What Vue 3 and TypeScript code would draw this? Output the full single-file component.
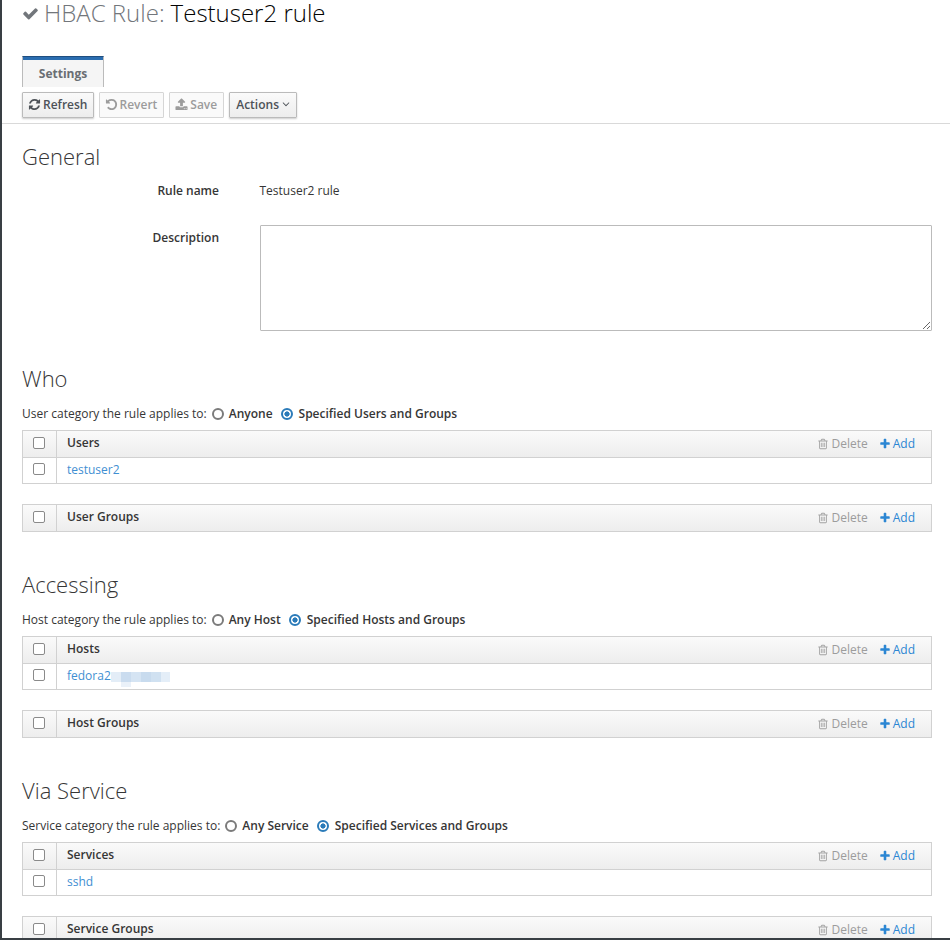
<script setup lang="ts">
interface Section {
  title: string
  prefix: string
  any: string
  specified: string
  main: string
  rows: string[]
  blurred?: boolean
  groups: string
}

const sections: Section[] = [
  { title: 'Who', prefix: 'User', any: 'Anyone', specified: 'Specified Users and Groups', main: 'Users', rows: ['testuser2'], groups: 'User Groups' },
  { title: 'Accessing', prefix: 'Host', any: 'Any Host', specified: 'Specified Hosts and Groups', main: 'Hosts', rows: ['fedora2'], blurred: true, groups: 'Host Groups' },
  { title: 'Via Service', prefix: 'Service', any: 'Any Service', specified: 'Specified Services and Groups', main: 'Services', rows: ['sshd'], groups: 'Service Groups' },
]

const trash = 'M704 736v576q0 14-9 23t-23 9h-64q-14 0-23-9t-9-23v-576q0-14 9-23t23-9h64q14 0 23 9t9 23zm256 0v576q0 14-9 23t-23 9h-64q-14 0-23-9t-9-23v-576q0-14 9-23t23-9h64q14 0 23 9t9 23zm256 0v576q0 14-9 23t-23 9h-64q-14 0-23-9t-9-23v-576q0-14 9-23t23-9h64q14 0 23 9t9 23zm128 724v-948h-896v948q0 22 7 40.5t14.5 27 10.5 8.5h832q3 0 10.5-8.5t14.5-27 7-40.5zm-672-1076h448l-48-117q-7-9-17-11h-317q-10 2-17 11zm928 32v64q0 14-9 23t-23 9h-96v948q0 83-47 143.5t-113 60.5h-832q-66 0-113-58.5t-47-141.5v-952h-96q-14 0-23-9t-9-23v-64q0-14 9-23t23-9h309l70-167q15-37 54-63t79-26h320q40 0 79 26t54 63l70 167h309q14 0 23 9t9 23z'
const plus = 'M1600 736v192q0 40-28 68t-68 28h-416v416q0 40-28 68t-68 28h-192q-40 0-68-28t-28-68v-416h-416q-40 0-68-28t-28-68v-192q0-40 28-68t68-28h416v-416q0-40 28-68t68-28h192q40 0 68 28t28 68v416h416q40 0 68 28t28 68z'
const check = 'M1671 566q0 40-28 68l-724 724-136 136q-28 28-68 28t-68-28l-136-136-362-362q-28-28-28-68t28-68l136-136q28-28 68-28t68 28l294 295 656-657q28-28 68-28t68 28l136 136q28 28 28 68z'
const refresh = 'M1639 1056q0 5-1 7-64 268-268 434.5t-478 166.5q-146 0-282.5-55t-243.5-157l-129 129q-19 19-45 19t-45-19-19-45v-448q0-26 19-45t45-19h448q26 0 45 19t19 45-19 45l-137 137q71 66 161 102t187 36q134 0 250-65t186-179q11-17 53-117 8-23 30-23h192q13 0 22.5 9.5t9.5 22.5zm25-800v448q0 26-19 45t-45 19h-448q-26 0-45-19t-19-45 19-45l138-138q-148-137-349-137-134 0-250 65t-186 179q-11 17-53 117-8 23-30 23h-199q-13 0-22.5-9.5t-9.5-22.5v-7q65-268 270-434.5t480-166.5q146 0 284 55.5t245 156.5l130-129q19-19 45-19t45 19 19 45z'
const undo = 'M1664 896q0 156-61 298t-164 245-245 164-298 61q-172 0-327-72.5t-264-204.5q-7-10-6.5-22.5t8.5-20.5l137-138q10-9 25-9 16 2 23 12 73 95 179 147t225 52q104 0 198.5-40.5t163.5-109.5 109.5-163.5 40.5-198.5-40.5-198.5-109.5-163.5-163.5-109.5-198.5-40.5q-98 0-188 35.5t-160 101.5l137 138q31 30 14 69-17 40-59 40h-448q-26 0-45-19t-19-45v-448q0-42 40-59 39-17 69 14l130 129q107-101 244.5-156.5t284.5-55.5q156 0 298 61t245 164 164 245 61 298z'
const upload = 'M1344 1472q0-26-19-45t-45-19-45 19-19 45 19 45 45 19 45-19 19-45zm256 0q0-26-19-45t-45-19-45 19-19 45 19 45 45 19 45-19 19-45zm128-224v320q0 40-28 68t-68 28h-1472q-40 0-68-28t-28-68v-320q0-40 28-68t68-28h427q21 56 70.5 92t110.5 36h256q61 0 110.5-36t70.5-92h427q40 0 68 28t28 68zm-325-648q-17 40-59 40h-256v448q0 26-19 45t-45 19h-256q-26 0-45-19t-19-45v-448h-256q-42 0-59-40-17-39 14-69l448-448q18-19 45-19t45 19l448 448q31 30 14 69z'
const angle = 'M1395 736q0 13-10 23l-466 466q-10 10-23 10t-23-10l-466-466q-10-10-10-23t10-23l50-50q10-10 23-10t23 10l393 393 393-393q10-10 23-10t23 10l50 50q10 10 10 23z'
</script>

<template>
  <div class="page">
    <h1 class="title">
      <svg class="check" viewBox="0 0 1792 1792" width="17" height="17"><path :d="check" fill="#72767b" /></svg>
      <span class="kind">HBAC Rule:</span>
      <span class="name">Testuser2 rule</span>
    </h1>

    <div class="tabs"><div class="tab">Settings</div></div>

    <div class="toolbar">
      <button class="btn">
        <svg class="ic" viewBox="0 0 1792 1792" width="13" height="13"><path :d="refresh" fill="#4d5258" /></svg>
        Refresh
      </button>
      <button class="btn off revert">
        <svg class="ic" viewBox="0 0 1792 1792" width="13" height="13"><path :d="undo" fill="#9c9c9c" /></svg>
        Revert
      </button>
      <button class="btn off">
        <svg class="ic" viewBox="0 0 1792 1792" width="13" height="13"><path :d="upload" fill="#9c9c9c" /></svg>
        Save
      </button>
      <button class="btn drop">
        Actions
        <svg class="chev" viewBox="0 0 1792 1792" width="12" height="12"><path :d="angle" fill="#4d5258" /></svg>
      </button>
    </div>

    <div class="rule"></div>

    <div class="content">
      <h2 class="heading first">General</h2>
      <div class="field name-field">
        <label class="flabel">Rule name</label>
        <span class="fvalue">Testuser2 rule</span>
      </div>
      <div class="field desc-field">
        <label class="flabel">Description</label>
        <textarea class="desc"></textarea>
      </div>

      <section v-for="s in sections" :key="s.title" class="sec">
        <h2 class="heading">{{ s.title }}</h2>
        <div class="cat">
          <span>{{ s.prefix }} category the rule applies to:</span>
          <span class="radio"></span><b class="rlabel">{{ s.any }}</b>
          <span class="radio on"></span><b class="rlabel">{{ s.specified }}</b>
        </div>

        <div class="tbl">
          <div class="thead">
            <div class="cb-cell"><span class="cb"></span></div>
            <div class="hname">{{ s.main }}</div>
            <span class="act del">
              <svg viewBox="0 0 1792 1792" width="12" height="12"><path :d="trash" fill="#a3a3a3" /></svg>
              Delete
            </span>
            <span class="act add">
              <svg viewBox="0 0 1792 1792" width="12" height="12"><path :d="plus" fill="#2b86d3" /></svg>
              Add
            </span>
          </div>
          <div v-for="r in s.rows" :key="r" class="trow">
            <div class="cb-cell"><span class="cb"></span></div>
            <a class="link">{{ r }}<span v-if="s.blurred" class="smudge"></span></a>
          </div>
        </div>

        <div class="tbl second">
          <div class="thead">
            <div class="cb-cell"><span class="cb"></span></div>
            <div class="hname">{{ s.groups }}</div>
            <span class="act del">
              <svg viewBox="0 0 1792 1792" width="12" height="12"><path :d="trash" fill="#a3a3a3" /></svg>
              Delete
            </span>
            <span class="act add">
              <svg viewBox="0 0 1792 1792" width="12" height="12"><path :d="plus" fill="#2b86d3" /></svg>
              Add
            </span>
          </div>
        </div>
      </section>
    </div>
  </div>
</template>

<style>
html, body { margin: 0; overflow: hidden; background: #fff; }
</style>

<style scoped>
.page {
  box-sizing: border-box;
  width: 950px;
  height: 940px;
  overflow: hidden;
  border-left: 2px solid #393f44;
  border-bottom: 2px solid #393f44;
  background: #fff;
  font-family: "Open Sans", "Liberation Sans", sans-serif;
  font-size: 12px;
  color: #363636;
}
.title {
  display: flex;
  align-items: center;
  height: 26px;
  margin: 0;
  padding-left: 20px;
  font-size: 24px;
  font-weight: 300;
  line-height: 26px;
}
.check { margin-right: 5px; }
.kind { color: #72767b; margin-right: 6px; }
.name { color: #030303; }
.tabs { margin-top: 30px; padding-left: 20px; height: 31px; }
.tab {
  box-sizing: border-box;
  width: 82px;
  height: 31px;
  border: 1px solid #bbb;
  border-bottom: 0;
  border-top: 1px solid #1f4e80;
  background: #f5f5f5;
  text-align: center;
  font-weight: 700;
  line-height: 34px;
  color: #6a6e73;
  box-shadow: inset 0 3px 0 #2a6db0;
}
.toolbar { display: flex; gap: 5px; padding: 5px 0 0 20px; height: 26px; }
.btn {
  display: inline-flex;
  align-items: center;
  gap: 2px;
  box-sizing: border-box;
  height: 26px;
  padding: 0 6px 2px 5px;
  border: 1px solid #bbb;
  border-radius: 1px;
  background: linear-gradient(#fafafa, #ededed);
  font: 600 12px "Open Sans", sans-serif;
  color: #4d5258;
  box-shadow: 0 1px 2px rgba(3, 3, 3, 0.2);
}
.btn.off {
  background: #fafafa;
  border-color: #d6d6d6;
  color: #9c9c9c;
  box-shadow: none;
}
.btn.revert { gap: 1px; }
.btn.drop { padding: 0 4px 2px 6px; gap: 1px; }
.ic { flex: none; }
.rule { height: 1px; margin-top: 5px; background: #d9d9d9; }
.content { padding: 0 18px 0 20px; }
.heading {
  margin: 0;
  font-size: 22px;
  font-weight: 300;
  line-height: 28px;
  color: #363636;
}
.heading.first { margin-top: 18px; }
.field { display: flex; }
.flabel {
  width: 197px;
  text-align: right;
  font-weight: 600;
  color: #363636;
}
.name-field { margin-top: 12px; line-height: 18px; }
.fvalue { margin-left: 40.5px; }
.desc-field { margin-top: 29px; line-height: 18px; }
.desc {
  box-sizing: border-box;
  width: 672px;
  height: 106px;
  margin: -4px 0 0 41px;
  border: 1px solid #bbb;
  border-radius: 1px;
  background: #fff;
  outline: none;
}
.sec { margin-top: 33px; }
.sec + .sec { margin-top: 38px; }
.cat {
  display: flex;
  align-items: center;
  height: 18px;
  margin-top: 13px;
  line-height: 18px;
}
.radio {
  box-sizing: border-box;
  width: 12px;
  height: 12px;
  margin: 0 5px;
  border: 2px solid #7b7b7b;
  border-radius: 50%;
  background: #fff;
}
.radio.on {
  margin: 0 6px 0 8px;
  border-color: #2b7bb9;
  background: radial-gradient(circle, #2b7bb9 0 2.3px, #fff 2.9px);
}
.rlabel { font-weight: 600; }
.tbl {
  box-sizing: border-box;
  margin-top: 7px;
  border: 1px solid #d1d1d1;
}
.tbl.second { margin-top: 20px; }
.thead, .trow { display: flex; align-items: center; }
.thead {
  height: 26px;
  background: linear-gradient(#fafafa, #ededed);
}
.trow {
  height: 25px;
  border-top: 1px solid #d1d1d1;
  background: #fff;
}
.cb-cell {
  box-sizing: border-box;
  display: flex;
  align-items: center;
  justify-content: center;
  flex: none;
  align-self: stretch;
  width: 34px;
  padding: 0 2px 2px 0;
  border-right: 1px solid #d1d1d1;
}
.trow .cb-cell { padding-bottom: 4px; }
.cb {
  box-sizing: border-box;
  width: 12px;
  height: 12px;
  border: 1px solid #8a8a8a;
  border-radius: 2px;
  background: #fff;
}
.hname { flex: 1; padding: 0 0 3px 10px; font-weight: 600; color: #363636; }
.act { display: inline-flex; align-items: center; gap: 2px; padding-bottom: 1px; }
.del { color: #9c9c9c; margin-right: 11px; }
.add { color: #2b86d3; margin-right: 16px; }
.link { position: relative; padding: 0 0 2px 10px; color: #3f8fd2; }
.smudge {
  position: relative;
  display: inline-block;
  width: 59px;
  height: 10px;
  vertical-align: middle;
  background: linear-gradient(90deg,
    #e3edf7 0 10px, #cadcef 10px 20px, #d5e4f3 20px 30px,
    #c8dbee 30px 40px, #d0e1f1 40px 50px, #e4eef8 50px);
}
.smudge::after {
  content: "";
  position: absolute;
  left: 10px;
  top: 10px;
  width: 10px;
  height: 5px;
  background: #eaf1f9;
}
</style>
